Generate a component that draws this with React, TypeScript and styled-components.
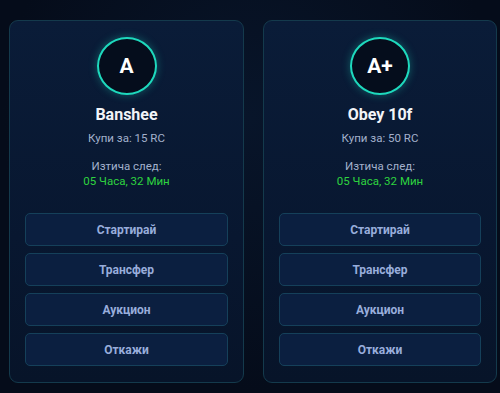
import styled, { createGlobalStyle } from 'styled-components';

const GlobalStyle = createGlobalStyle`
  html, body {
    margin: 0;
    padding: 0;
    background: #050c1a;
  }
  body {
    font-family: Roboto, 'Noto Sans', sans-serif;
  }
`;

type License = {
  grade: string;
  name: string;
  price: number;
  hours: string;
  minutes: string;
};

const licenses: License[] = [
  { grade: 'A', name: 'Banshee', price: 15, hours: '05', minutes: '32' },
  { grade: 'A+', name: 'Obey 10f', price: 50, hours: '05', minutes: '32' },
];

const actions = ['Стартирай', 'Трансфер', 'Аукцион', 'Откажи'];

function App() {
  return (
    <>
      <GlobalStyle />
      <Page>
        {licenses.map((l) => (
          <Card key={l.name}>
            <Badge>{l.grade}</Badge>
            <Title>{l.name}</Title>
            <Price>Купи за: {l.price} RC</Price>
            <Expiry>
              <span>Изтича след:</span>
              <Timer>
                {l.hours} Часа, {l.minutes} Мин
              </Timer>
            </Expiry>
            <Actions>
              {actions.map((a) => (
                <ActionButton key={a}>{a}</ActionButton>
              ))}
            </Actions>
          </Card>
        ))}
      </Page>
    </>
  );
}

const Page = styled.div`
  width: 500px;
  height: 393px;
  box-sizing: border-box;
  padding: 20px 3px 10px 9px;
  display: grid;
  grid-template-columns: 235px 234px;
  column-gap: 19px;
  align-items: start;
  background: radial-gradient(ellipse at 50% 30%, #08152a 0%, #050c1a 70%);
  overflow: hidden;
`;

const Card = styled.div`
  box-sizing: border-box;
  height: 363px;
  padding: 16px 15px 16px 15px;
  display: flex;
  flex-direction: column;
  align-items: center;
  background: linear-gradient(180deg, #0a1c38 0%, #081730 60%, #071429 100%);
  border: 1px solid #143a4c;
  border-radius: 9px;
`;

const Badge = styled.div`
  box-sizing: border-box;
  width: 60px;
  height: 60px;
  border-radius: 50%;
  border: 2px solid #1ed9bd;
  background: #050d1c;
  box-shadow: 0 0 8px rgba(30, 217, 189, 0.35);
  display: flex;
  align-items: center;
  justify-content: center;
  color: #ffffff;
  font-size: 21px;
  font-weight: 700;
`;

const Title = styled.div`
  margin-top: 10px;
  color: #f2f4f8;
  font-size: 16px;
  font-weight: 700;
  line-height: 20px;
`;

const Price = styled.div`
  margin-top: 6px;
  color: #a3b1cc;
  font-size: 11.5px;
  line-height: 15px;
`;

const Expiry = styled.div`
  margin-top: 13px;
  display: flex;
  flex-direction: column;
  align-items: center;
  color: #a3b1cc;
  font-size: 11.5px;
  line-height: 15px;
`;

const Timer = styled.span`
  color: #2ed43f;
`;

const Actions = styled.div`
  margin-top: 24px;
  width: 100%;
  display: flex;
  flex-direction: column;
  gap: 7px;
`;

const ActionButton = styled.button`
  box-sizing: border-box;
  height: 33px;
  width: 100%;
  border: 1px solid #15405a;
  border-radius: 5px;
  background: #0b1f40;
  color: #98addb;
  font-family: Roboto, 'Noto Sans', sans-serif;
  font-size: 12px;
  font-weight: 700;
  cursor: pointer;
`;

export default App;
